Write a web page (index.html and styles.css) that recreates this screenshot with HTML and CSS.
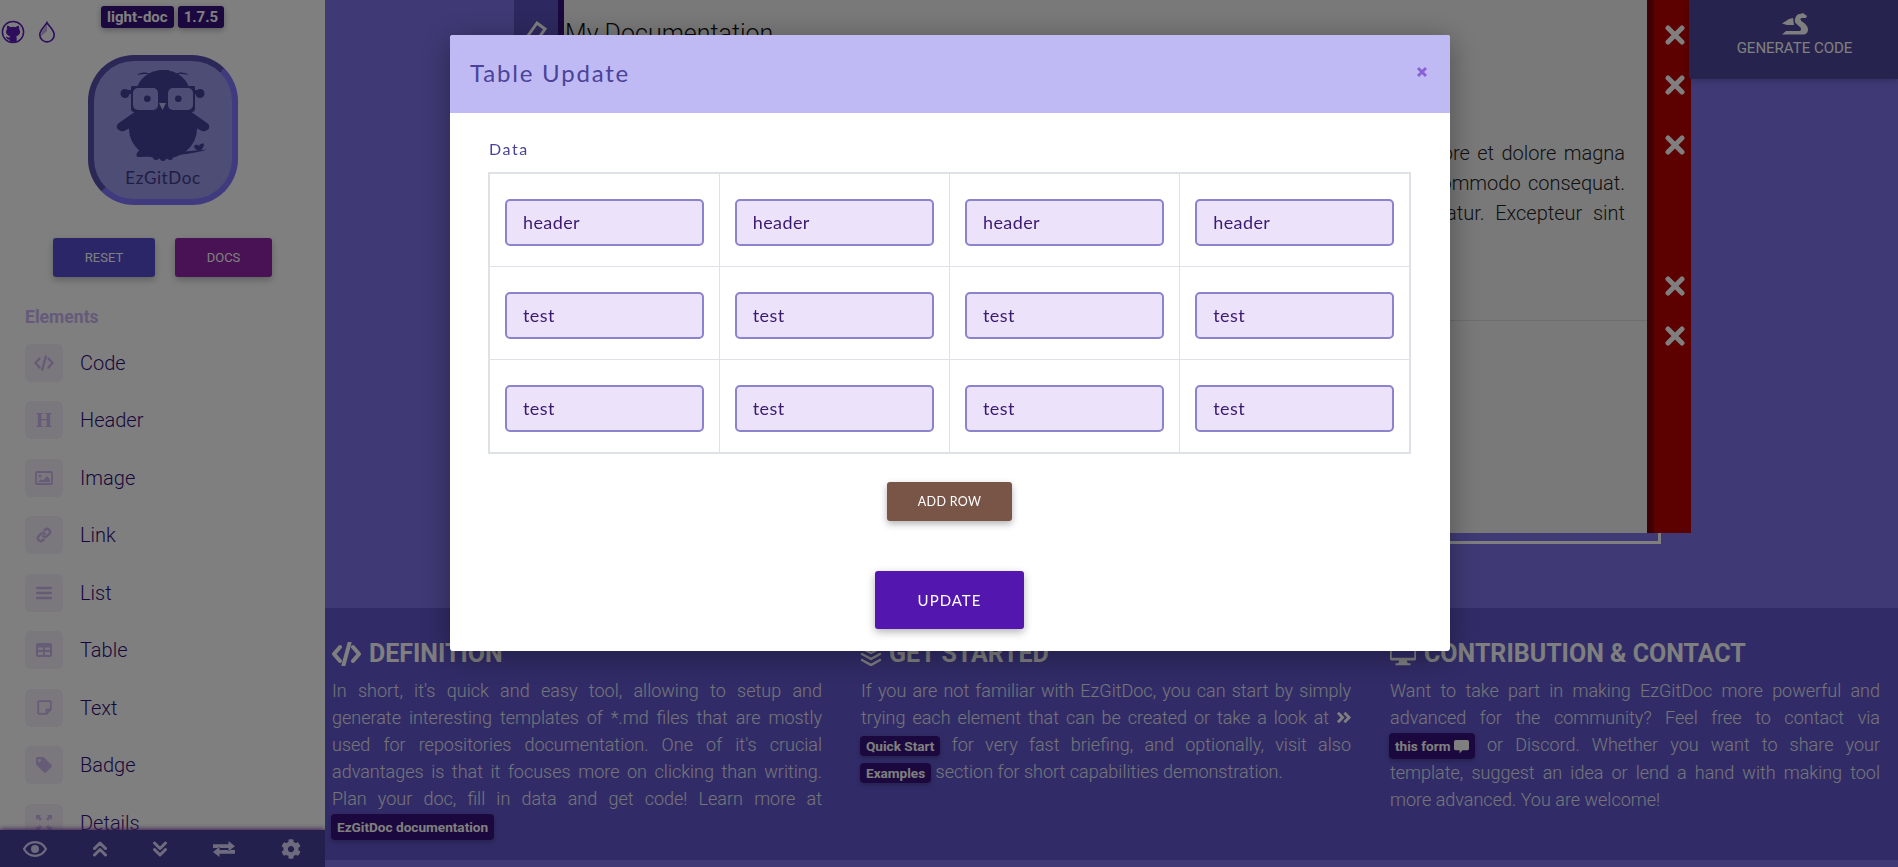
FILE: index.html
```html
<!DOCTYPE html>
<html lang="en">
<head>
<meta charset="utf-8">
<title>EzGitDoc</title>
<link rel="stylesheet" href="styles.css">
</head>
<body>
<div class="app">
  <aside class="sidebar">
    <div class="side-top">
      <div class="socials">
        <svg class="social" viewBox="0 0 24 24" width="24" height="24"><circle cx="12" cy="12" r="10.6" fill="none" stroke-width="1.5"/><path d="M6.500 6l3 1.600c1.600-.4 3.400-.4 5 0l3-1.600.4 3.400c1 1.300 1 3.800-.2 5-1 1-2.200 1.300-3.200 1.400.5.500.6 1 .6 1.800v3.700h-6v-2.200c-1.800.3-3-.3-3.800-2 1 .6 2 1.300 3.800.8 0-.9.100-1.600.6-2.100-1-.1-2.200-.4-3.200-1.400-1.200-1.200-1.200-3.700-.2-5z"/></svg>
        <svg class="social drop" viewBox="0 0 20 24" width="18" height="24"><path d="M10 1.500c2 4 8 8 8 13.500a8 8 0 0 1-16 0c0-5.500 6-9.500 8-13.500z" fill="none" stroke-width="1.800"/><path d="M3.500 16.500c-.5-4 4-8.500 6.500-12.500v7z" class="drop-fill"/></svg>
      </div>
      <div class="versions"><span class="badge">light-doc</span><span class="badge">1.7.5</span></div>
    </div>
    <div class="logo">
      <svg class="owl" viewBox="0 0 138 110" width="138" height="110">
        <g transform="translate(-6 -6)">
          <path d="M49 17c3-3 9-3.500 13.500-.5-4.500-.8-9-.5-13.500.5zM100.500 17c-3-3-9-3.500-13.500-.5 4.500-.8 9-.5 13.500.5z"/>
          <path d="M75 22c-2-3-4-7-4.500-10 2 .5 3.500 1 4.500 2 1.500-1.500 3-2 6-2-1 3-3 7-6 10z"/>
          <ellipse cx="75" cy="36" rx="27" ry="24"/>
          <ellipse cx="75" cy="71" rx="34" ry="30"/>
          <path d="M31 72c-3-1-3-5 0-7l17-12 4 12-16 8c-2 .5-3.500.2-5-1zM119 72c3-1 3-5 0-7l-17-12-4 12 16 8c2 .5 3.500.2 5-1z"/>
          <circle cx="37" cy="35.500" r="4.500"/><circle cx="112" cy="35.500" r="4.500"/>
          <rect x="39" y="32" width="71" height="4"/>
          <path d="M44 28h25c2 0 3 1 3 3v20c0 2-1 3-3 3H47c-3 0-4-1-4-4V29zM81 28h24c1 0 2 0 2 1v21c0 3-1 4-4 4H81c-2 0-3-1-3-3V31c0-2 1-3 3-3z" class="owl-frame"/>
          <rect class="owl-glass" x="45" y="30" width="25" height="22" rx="5"/>
          <rect class="owl-glass" x="80" y="30" width="25" height="22" rx="5"/>
          <circle cx="59.300" cy="40.700" r="3.300"/><circle cx="90.300" cy="40.700" r="3.300"/>
          <path class="owl-beak" d="M71 45h7l-3.500 7z"/>
          <path d="M50 95c22 0 48-1 69-3.500-8 3-30 7-69 7.500-2 0-2-4 0-4z"/>
          <rect x="49" y="93" width="40" height="5" rx="2.500"/>
          <path d="M106 88c2-2 4-1 5 0 1-2 3-3 5-2 0 3-2 6-5 7-3-1-5-3-5-5z"/>
          <circle cx="68" cy="99" r="3"/><circle cx="75" cy="100" r="3"/><circle cx="82" cy="99" r="3"/>
        </g>
      </svg>
      <span class="logo-name">EzGitDoc</span>
    </div>
    <div class="side-actions">
      <button class="side-btn reset">RESET</button>
      <button class="side-btn docs">DOCS</button>
    </div>
    <h3 class="elements-title">Elements</h3>
    <ul class="elements">
      <li class="element"><span class="el-icon"><svg viewBox="0 0 20 16" width="20" height="16"><path d="M5.500 3.500L1.500 8l4 4.500M14.500 3.500l4 4.500-4 4.500M11.800 1.500L8.200 14.500" class="st"/></svg></span>Code</li>
      <li class="element"><span class="el-icon"><span class="h-glyph">H</span></span>Header</li>
      <li class="element"><span class="el-icon"><svg viewBox="0 0 18 14" width="18" height="14"><rect x="1" y="1" width="16" height="12" rx="1" class="st thin"/><circle cx="5" cy="5" r="1.500" class="fl"/><path d="M3 11l3-3 2 1.500L12 5l3 3.500V11z" class="fl"/></svg></span>Image</li>
      <li class="element"><span class="el-icon"><svg viewBox="0 0 16 16" width="16" height="16"><path d="M7 9a3 3 0 0 0 4.200 0l2.300-2.300a3 3 0 0 0-4.200-4.200L8.300 3.500M9 7a3 3 0 0 0-4.200 0L2.500 9.300a3 3 0 0 0 4.200 4.200l1-1" class="st"/></svg></span>Link</li>
      <li class="element"><span class="el-icon"><svg viewBox="0 0 16 14" width="16" height="14"><path d="M1 2h14M1 7h14M1 12h14" class="st"/></svg></span>List</li>
      <li class="element"><span class="el-icon"><svg viewBox="0 0 16 14" width="16" height="14"><path class="fl" d="M2 0h12a2 2 0 0 1 2 2v10a2 2 0 0 1-2 2H2a2 2 0 0 1-2-2V2a2 2 0 0 1 2-2zm0 4.500v2.500h5V4.500zm7 0v2.500h5V4.500zm-7 4.500v3h5V9zm7 0v3h5V9z" fill-rule="evenodd"/></svg></span>Table</li>
      <li class="element"><span class="el-icon"><svg viewBox="0 0 15 15" width="15" height="15"><path d="M9.500 13.800H2.200a1 1 0 0 1-1-1V2.200a1 1 0 0 1 1-1h10.600a1 1 0 0 1 1 1v7.300zM9.500 13.800V9.500h4.300" class="st thin"/></svg></span>Text</li>
      <li class="element"><span class="el-icon"><svg viewBox="0 0 16 16" width="16" height="16"><path class="fl" d="M0 1.500A1.500 1.500 0 0 1 1.500 0h5.400c.4 0 .8.200 1.100.4l7.500 7.500c.6.600.6 1.500 0 2.100l-5.400 5.500c-.6.600-1.500.6-2.100 0L.5 8C.2 7.700 0 7.300 0 6.900zM3.500 5a1.500 1.500 0 1 0 0-3 1.500 1.500 0 0 0 0 3z" fill-rule="evenodd"/></svg></span>Badge</li>
      <li class="element"><span class="el-icon"><svg viewBox="0 0 16 16" width="16" height="16"><path class="fl" d="M0 0h5L3.500 1.600 6 4 4 6 1.600 3.500 0 5zM16 0v5l-1.600-1.500L12 6l-2-2 2.400-2.400L11 0zM0 16v-5l1.600 1.500L4 10l2 2-2.400 2.400L5 16zM16 16h-5l1.500-1.600L10 12l2-2 2.400 2.400L16 11z"/></svg></span>Details</li>
    </ul>
    <nav class="side-bar-bottom">
      <svg class="tool" viewBox="0 0 24 16" width="24" height="16"><path d="M12 1.200C7 1.200 3 4.500 1 8c2 3.500 6 6.800 11 6.800S21 11.500 23 8c-2-3.500-6-6.800-11-6.800z" class="st-b"/><circle cx="12" cy="8" r="4"/></svg>
      <svg class="tool" viewBox="0 0 14 16" width="14" height="16"><path d="M1.500 7.500L7 2l5.500 5.500M1.500 14L7 8.500l5.500 5.500" class="st-b wide"/></svg>
      <svg class="tool" viewBox="0 0 14 16" width="14" height="16"><path d="M1.500 2L7 7.500 12.500 2M1.500 8.500L7 14l5.500-5.500" class="st-b wide"/></svg>
      <svg class="tool" viewBox="0 0 22 16" width="22" height="16"><path d="M0 3.200h15.500V0L22 5.200l-6.500 5V7H0zM22 9H6.500V5.800L0 11l6.500 5v-3.200H22z"/></svg>
      <svg class="tool" viewBox="0 0 512 512" width="20" height="20"><path d="M487.400 315.700l-42.600-24.600c4.300-23.200 4.300-47 0-70.200l42.600-24.600c4.900-2.800 7.100-8.600 5.500-14-11.100-35.600-30-67.800-54.700-94.600-3.800-4.100-10-5.100-14.800-2.300L380.800 110c-17.900-15.400-38.500-27.300-60.800-35.100V25.800c0-5.600-3.900-10.500-9.400-11.700-36.700-8.200-74.300-7.800-109.200 0-5.500 1.200-9.400 6.100-9.400 11.700V75c-22.200 7.900-42.800 19.800-60.800 35.100L88.700 85.500c-4.900-2.800-11-1.900-14.800 2.300-24.700 26.700-43.600 58.900-54.700 94.600-1.700 5.400.6 11.200 5.500 14L67.300 221c-4.300 23.200-4.300 47 0 70.200l-42.600 24.600c-4.900 2.800-7.100 8.600-5.500 14 11.100 35.600 30 67.800 54.700 94.600 3.800 4.100 10 5.100 14.800 2.300l42.600-24.600c17.900 15.400 38.500 27.300 60.800 35.100v49.200c0 5.600 3.900 10.500 9.400 11.700 36.700 8.200 74.300 7.800 109.200 0 5.500-1.200 9.400-6.100 9.400-11.700v-49.200c22.200-7.900 42.800-19.800 60.800-35.100l42.600 24.600c4.900 2.800 11 1.900 14.800-2.300 24.700-26.700 43.600-58.900 54.700-94.600 1.500-5.500-.7-11.300-5.600-14.100zM256 336c-44.100 0-80-35.900-80-80s35.900-80 80-80 80 35.900 80 80-35.900 80-80 80z"/></svg>
    </nav>
  </aside>

  <main class="main">
    <section class="workspace">
      <div class="document">
        <div class="doc-outline"></div>
        <div class="doc-tools"><svg viewBox="0 0 22 22" width="22" height="22"><path d="M2 19L12 5l8 6-7 10" class="pencil"/></svg></div>
        <div class="doc-edge"></div>
        <article class="paper">
          <div class="paper-head"><h1 class="paper-title">My Documentation</h1></div>
          <p class="paper-text"><span class="paper-line">Lorem ipsum dolor sit amet, consectetur adipiscing elit, sed do eiusmod tempor incididunt ut labore et dolore magna</span> <span class="paper-line">aliqua. Ut enim ad minim veniam, quis nostrud exercitation ullamco laboris nisi ut aliquip ex ea commodo consequat.</span> <span class="paper-line">Duis aute irure dolor in reprehenderit in voluptate velit esse cillum dolore eu fugiat nulla pariatur. Excepteur sint</span> occaecat cupidatat non proident, sunt in culpa qui officia deserunt mollit anim id est laborum.</p>
          <hr class="paper-rule">
        </article>
        <div class="remove-strip">
          <svg class="rm s1" viewBox="0 0 20 20" width="20" height="20"><path d="M3 3l14 14M17 3L3 17"/></svg>
          <svg class="rm s2" viewBox="0 0 20 20" width="20" height="20"><path d="M3 3l14 14M17 3L3 17"/></svg>
          <svg class="rm s3" viewBox="0 0 20 20" width="20" height="20"><path d="M3 3l14 14M17 3L3 17"/></svg>
          <svg class="rm s4" viewBox="0 0 20 20" width="20" height="20"><path d="M3 3l14 14M17 3L3 17"/></svg>
          <svg class="rm s2" viewBox="0 0 20 20" width="20" height="20"><path d="M3 3l14 14M17 3L3 17"/></svg>
        </div>
      </div>
      <button class="generate">
        <svg viewBox="0 0 26 22" width="26" height="22"><path d="M0 21.500L4 18h13c2 0 3-2 1-4-3-3-6-4-5-8 .8-3 2-5 5-5l3-1 4 3-1 2h-4c-2 0-2 2 0 3.500 3 2 6 4.500 6 8 0 3-2 5-5 5zM0 10.500L7 6l4-1 1 7H5z"/></svg>
        <span>GENERATE CODE</span>
      </button>
    </section>

    <section class="info">
      <div class="info-col">
        <h2 class="info-head"><svg viewBox="0 0 30 24" width="31" height="24"><path d="M8.500 5L2.500 12l6 7M21.500 5l6 7-6 7M18 1l-6 22" class="head-stroke"/></svg>DEFINITION</h2>
        <p class="info-text">In short, it's quick and easy tool, allowing to setup and generate interesting templates of *.md files that are mostly used for repositories documentation. One of it's crucial advantages is that it focuses more on clicking than writing. Plan your doc, fill in data and get code! Learn more at <a class="tag tag-lg">EzGitDoc documentation</a></p>
      </div>
      <div class="info-col">
        <h2 class="info-head"><svg viewBox="0 0 22 24" width="22" height="24"><path d="M11 1l10 5-10 5L1 6zM2 12l9 5 9-5M2 18l9 5 9-5" class="head-stroke narrow"/></svg>GET STARTED</h2>
        <p class="info-text">If you are not familiar with EzGitDoc, you can start by simply trying each element that can be created or take a look at <svg class="inline-chev" viewBox="0 0 16 14" width="15" height="13"><path d="M2 2l5 5-5 5M9 2l5 5-5 5"/></svg> <a class="tag">Quick Start</a> for very fast briefing, and optionally, visit also <a class="tag">Examples</a> section for short capabilities demonstration.</p>
      </div>
      <div class="info-col">
        <h2 class="info-head"><svg viewBox="0 0 30 24" width="28" height="24"><path d="M3 2h24a2 2 0 0 1 2 2v13a2 2 0 0 1-2 2H3a2 2 0 0 1-2-2V4a2 2 0 0 1 2-2zm0 3v11h24V5zM11 19h8l1 3h3v2H7v-2h3z" fill-rule="evenodd" class="head-fill"/></svg>CONTRIBUTION &amp; CONTACT</h2>
        <p class="info-text">Want to take part in making EzGitDoc more powerful and advanced for the community? Feel free to contact via <a class="tag tag-lg">this form <svg viewBox="0 0 16 16" width="15" height="15"><path d="M2 1h12a2 2 0 0 1 2 2v7a2 2 0 0 1-2 2H9l-3 3.500V12H2a2 2 0 0 1-2-2V3a2 2 0 0 1 2-2z"/></svg></a> or Discord. Whether you want to share your template, suggest an idea or lend a hand with making tool more advanced. You are welcome!</p>
      </div>
    </section>
    <div class="main-foot"></div>
  </main>
</div>

<div class="backdrop"></div>
<div class="modal-wrap">
  <div class="modal" role="dialog">
    <header class="modal-head">
      <h2 class="modal-title">Table Update</h2>
      <svg class="modal-close" viewBox="0 0 12 12" width="12" height="12"><path d="M2 2l8 8M10 2l-8 8"/></svg>
    </header>
    <div class="modal-body">
      <label class="field-label">Data</label>
      <table class="data-table">
        <tr><td><div class="cell-field">header</div></td><td><div class="cell-field">header</div></td><td><div class="cell-field">header</div></td><td><div class="cell-field">header</div></td></tr>
        <tr><td><div class="cell-field">test</div></td><td><div class="cell-field">test</div></td><td><div class="cell-field">test</div></td><td><div class="cell-field">test</div></td></tr>
        <tr><td><div class="cell-field">test</div></td><td><div class="cell-field">test</div></td><td><div class="cell-field">test</div></td><td><div class="cell-field">test</div></td></tr>
      </table>
      <button class="add-row">ADD ROW</button>
      <button class="update">UPDATE</button>
    </div>
  </div>
</div>
</body>
</html>
```
FILE: styles.css
```css
* { box-sizing: border-box; }
html, body { margin: 0; height: 100%; overflow: hidden; }
body { font-family: Roboto, "Liberation Sans", sans-serif; background: #7e74ea; }
button { font-family: inherit; border: 0; cursor: pointer; }
h1, h2, h3, p, ul { margin: 0; padding: 0; }

.app { display: flex; width: 1898px; height: 867px; }

/* sidebar */
.sidebar { width: 325px; height: 867px; flex: none; background: #fff; display: flex; flex-direction: column; overflow: hidden; }
.side-top { display: flex; height: 43px; position: relative; }
.socials { display: flex; gap: 13px; padding: 20px 0 0 1px; }
.social { fill: #5a1ab8; stroke: #5a1ab8; flex: none; }
.social path:first-child { stroke-width: 0; }
.drop path:first-child { stroke-width: 1.8; }
.drop-fill { fill: #c0b0e0; stroke: none; }
.versions { display: flex; gap: 4px; padding: 6px 0 0 45px; }
.badge { height: 22px; padding: 0 6px; background: #36107c; color: #fff; border-radius: 3px; font-size: 15px; font-weight: 700; line-height: 22px; box-shadow: 0 2px 6px rgba(0,0,0,.3); }

.logo { width: 150px; height: 150px; margin: 12px 0 0 88px; border-radius: 46px; border: 6px solid; border-color: #564eae #8074ff #8074ff #564eae; background: #9c9aea; display: flex; flex-direction: column; align-items: center; }
.owl { fill: #444098; margin-top: 3px; flex: none; }
.owl-glass { fill: #9c9aea; }
.owl-frame { fill: #444098; }
.owl-beak { fill: #b9b7f0; }
.logo-name { font-family: Lato, sans-serif; font-size: 17px; letter-spacing: .6px; color: #403a88; line-height: 20px; margin-top: -6px; }

.side-actions { display: flex; gap: 20px; padding: 33px 0 0 53px; }
.side-btn { height: 39px; color: #fff; font-size: 13px; border-radius: 3px; box-shadow: 0 3px 7px rgba(0,0,0,.25); }
.reset { width: 102px; background: #544cd0; }
.docs { width: 97px; background: #9024a8; }

.elements-title { margin: 30px 0 0 25px; font-size: 17.600px; line-height: 20px; font-weight: 700; color: #cdb4f4; }
.elements { list-style: none; flex: 1; min-height: 0; overflow: hidden; padding-top: 16.500px; }
.element { display: flex; align-items: center; gap: 17px; height: 38px; margin: 0 0 19.500px 25px; font-size: 20px; font-weight: 300; color: #300e78; }
.el-icon { width: 38px; height: 38px; flex: none; border-radius: 6px; background: #f4f0f8; display: flex; align-items: center; justify-content: center; }
.h-glyph { font-family: "Liberation Serif", serif; font-weight: 700; font-size: 21px; color: #cdb8f0; }
.st { fill: none; stroke: #cdb8f0; stroke-width: 2.400; stroke-linecap: round; stroke-linejoin: round; }
.st.thin { stroke-width: 1.800; }
.fl { fill: #cdb8f0; }

.side-bar-bottom { height: 37px; flex: none; background: #46409a; box-shadow: 0 -1px 5px #7c3aa8; display: flex; align-items: center; justify-content: space-between; padding: 0 24px 0 23px; position: relative; }
.tool { fill: #dcd6ff; flex: none; }
.st-b { fill: none; stroke: #dcd6ff; stroke-width: 2.200; stroke-linejoin: round; }
.st-b.wide { stroke-width: 3; stroke-linecap: round; }

/* main */
.main { flex: 1; min-width: 0; display: flex; flex-direction: column; }
.workspace { height: 608px; flex: none; display: flex; position: relative; padding-left: 189px; }
.document { display: flex; height: 533px; width: 1177px; position: relative; }
.doc-outline { position: absolute; left: 0; right: 30px; top: -4px; bottom: -11px; border: 3px solid #fff; }
.doc-tools { width: 44px; background: #5a52c0; display: flex; justify-content: center; padding-top: 18px; position: relative; flex: none; }
.pencil { fill: none; stroke: #fff; stroke-width: 3; }
.doc-edge { width: 6px; background: #36107c; position: relative; flex: none; }
.paper { width: 1083px; flex: none; background: #f2f2f2; position: relative; }
.paper-head { height: 138px; padding: 18px 0 0 1px; }
.paper-title { font-size: 25px; font-weight: 300; line-height: 32px; color: #111; }
.paper-text { padding: 0 22px 0 3px; font-size: 20px; font-weight: 300; line-height: 30px; color: #222; }
.paper-line { display: block; text-align: justify; text-align-last: justify; }
.paper-rule { border: 0; border-top: 1px solid #dcdcdc; margin: 62px 0 0; }
.remove-strip { width: 44px; background: #b80000; border-left: 7px solid #7c0000; position: relative; display: flex; flex-direction: column; align-items: center; padding: 25px 0 0 5px; flex: none; }
.rm { flex: none; }
.rm path { stroke: #fff; stroke-width: 5; stroke-linecap: round; fill: none; }
.s2 { margin-top: 30px; }
.s3 { margin-top: 40px; }
.s4 { margin-top: 121px; }

.generate { position: absolute; right: 0; top: 0; width: 209px; height: 79px; background: #4c469e; color: #fff; font-size: 15px; border-radius: 0 0 0 3px; box-shadow: 0 2px 6px rgba(0,0,0,.2); display: flex; flex-direction: column; align-items: center; padding: 13px 0 0 2px; gap: 4px; }
.generate svg { fill: #fff; flex: none; }

.info { height: 252px; flex: none; background: #6258ce; display: grid; grid-template-columns: repeat(3, 1fr); gap: 38px; padding: 31px 18px 0 6px; }
.info-col { padding-left: 1px; }
.info-head { display: flex; align-items: center; gap: 7px; height: 30px; font-size: 25px; font-weight: 700; color: #fff; line-height: 30px; margin: 0 0 8px -1px; }
.info-head svg { flex: none; }
.head-stroke { fill: none; stroke: #fff; stroke-width: 4; stroke-linecap: round; stroke-linejoin: round; }
.head-stroke.narrow { stroke-width: 2.500; }
.head-fill { fill: #fff; }
.info-text { font-size: 18px; font-weight: 300; line-height: 27px; text-align: justify; color: #e8e8f2; }
.tag { display: inline-block; vertical-align: middle; height: 20px; line-height: 20px; padding: 0 6px; margin-left: -1px; background: #36107c; border-radius: 4px; color: #fff; font-size: 13.600px; font-weight: 700; box-shadow: 0 2px 5px rgba(0,0,0,.25); }
.tag-lg { height: 26px; line-height: 26px; }
.tag svg { fill: #fff; vertical-align: -3px; }
.inline-chev path { fill: none; stroke: #fff; stroke-width: 3; }
.main-foot { flex: 1; }

/* modal */
.backdrop { position: fixed; inset: 0; background: rgba(0,0,0,.5); }
.modal-wrap { position: fixed; inset: 0; display: flex; justify-content: center; align-items: flex-start; padding: 35px 0 0 2px; }
.modal { width: 1000px; height: 616px; background: #fff; border-radius: 3px; box-shadow: 0 5px 30px rgba(0,0,0,.35); overflow: hidden; font-family: Lato, sans-serif; }
.modal-head { height: 78px; background: #bfbaf4; display: flex; align-items: center; justify-content: space-between; padding: 0 22px 4px 20px; }
.modal-title { font-size: 24px; font-weight: 400; letter-spacing: 1.800px; color: #4b4399; }
.modal-close path { stroke: #8a62d8; stroke-width: 3; fill: none; }
.modal-body { display: flex; flex-direction: column; align-items: center; padding: 25px 39px 0 38px; }
.field-label { align-self: flex-start; margin-left: 1px; font-size: 16px; line-height: 22px; letter-spacing: 1.600px; color: #4b4399; margin-bottom: 12px; }
.data-table { width: 923px; table-layout: fixed; border-collapse: collapse; border: 2px solid #dee2e6; }
.data-table td { border: 1px solid #dee2e6; padding: 25px 15px 20px; }
.cell-field { height: 47px; border: 2px solid #8b84cc; border-radius: 5px; background: #ece3fb; padding: 0 16px; font-size: 18px; line-height: 43px; letter-spacing: .4px; color: #3c1a70; }
.add-row { width: 125px; height: 39px; margin-top: 28px; background: #795548; color: #fff; font-family: inherit; font-size: 12.500px; letter-spacing: .3px; border-radius: 3px; box-shadow: 0 3px 7px rgba(0,0,0,.3); }
.update { width: 149px; height: 58px; margin-top: 50px; background: #5316ae; color: #fff; font-family: inherit; font-size: 15px; letter-spacing: 1px; border-radius: 3px; box-shadow: 0 3px 8px rgba(0,0,0,.3); }
```
